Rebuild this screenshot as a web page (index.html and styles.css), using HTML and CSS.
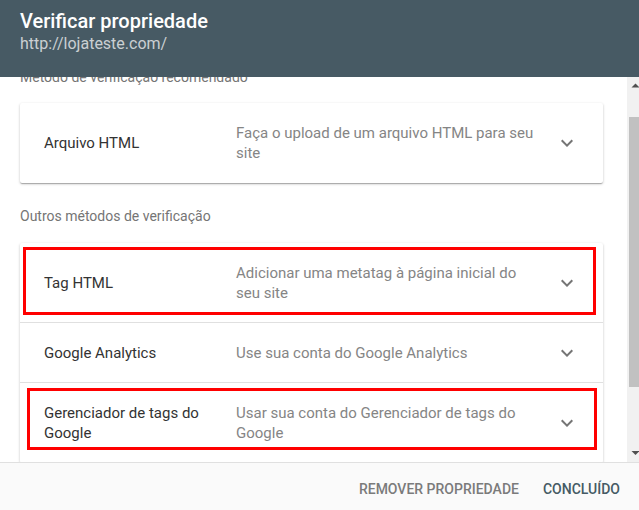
FILE: index.html
```html
<!DOCTYPE html>
<html lang="pt-BR">
<head>
<meta charset="utf-8">
<title>Verificar propriedade</title>
<link rel="stylesheet" href="styles.css">
</head>
<body>
<div class="dialog">
  <header class="head">
    <div class="head-title">Verificar propriedade</div>
    <div class="head-url">http://lojateste.com/</div>
  </header>
  <div class="body-area">
    <main class="content">
      <div class="section-label first">Método de verificação recomendado</div>
      <div class="card">
        <div class="row">
          <div class="m-title">Arquivo HTML</div>
          <div class="m-desc">Faça o upload de um arquivo HTML para seu site</div>
          <svg class="chev" viewBox="0 0 24 24" width="24" height="24"><path d="M16.59 8.59L12 13.17 7.41 8.59 6 10l6 6 6-6z"/></svg>
        </div>
      </div>
      <div class="section-label">Outros métodos de verificação</div>
      <div class="card">
        <div class="row divided mark mark-a">
          <div class="m-title">Tag HTML</div>
          <div class="m-desc">Adicionar uma metatag à página inicial do seu site</div>
          <svg class="chev" viewBox="0 0 24 24" width="24" height="24"><path d="M16.59 8.59L12 13.17 7.41 8.59 6 10l6 6 6-6z"/></svg>
        </div>
        <div class="row divided">
          <div class="m-title">Google Analytics</div>
          <div class="m-desc">Use sua conta do Google Analytics</div>
          <svg class="chev" viewBox="0 0 24 24" width="24" height="24"><path d="M16.59 8.59L12 13.17 7.41 8.59 6 10l6 6 6-6z"/></svg>
        </div>
        <div class="row mark mark-b">
          <div class="m-title">Gerenciador de tags do Google</div>
          <div class="m-desc">Usar sua conta do Gerenciador de tags do Google</div>
          <svg class="chev" viewBox="0 0 24 24" width="24" height="24"><path d="M16.59 8.59L12 13.17 7.41 8.59 6 10l6 6 6-6z"/></svg>
        </div>
      </div>
    </main>
    <div class="scrollbar" aria-hidden="true">
      <div class="sb-btn">
        <svg width="17" height="17" viewBox="0 0 17 17"><path d="M4.5 10.5L8.5 6.5L12.5 10.5Z"/></svg>
      </div>
      <div class="sb-track"><div class="sb-thumb"></div></div>
      <div class="sb-btn">
        <svg width="17" height="17" viewBox="0 0 17 17"><path d="M4.5 6L12.5 6L8.5 10Z"/></svg>
      </div>
    </div>
  </div>
  <footer class="foot">
    <span class="btn btn-muted">Remover propriedade</span>
    <span class="btn btn-primary">Concluído</span>
  </footer>
</div>
<script src="script.js"></script>
</body>
</html>
```
FILE: styles.css
```css
html, body {
  margin: 0;
  padding: 0;
  overflow: hidden;
  background: #fff;
}
body {
  font-family: Roboto, "Liberation Sans", Arial, sans-serif;
  width: 639px;
  height: 510px;
}
.dialog {
  width: 644px;
  height: 510px;
  display: flex;
  flex-direction: column;
}
.head {
  height: 77px;
  box-sizing: border-box;
  background: #475a64;
  padding: 9px 20px 0;
  flex-shrink: 0;
}
.head-title {
  color: #fff;
  font-size: 20px;
  font-weight: 500;
  line-height: 24px;
}
.head-url {
  color: rgba(255, 255, 255, 0.72);
  font-size: 16px;
  line-height: 20px;
  margin-top: 1px;
}
.body-area {
  flex: 1;
  min-height: 0;
  display: flex;
}
.content {
  flex: 1;
  min-width: 0;
  overflow: hidden;
  padding: 22px 24px 22px 20px;
  box-sizing: border-box;
}
.scrollbar {
  width: 17px;
  flex-shrink: 0;
  background: #f1f1f1;
  display: flex;
  flex-direction: column;
}
.sb-btn {
  height: 17px;
  flex-shrink: 0;
}
.sb-btn svg {
  display: block;
  fill: #505050;
}
.sb-track {
  flex: 1;
  padding: 0 2px;
}
.sb-thumb {
  margin-top: 22.5px;
  height: 270px;
  background: #c1c1c1;
}
.section-label {
  color: #757575;
  font-size: 14px;
  line-height: 20px;
  margin: 23px 0 17px;
}
.section-label.first {
  margin-top: 0;
  margin-bottom: 16px;
}
.card {
  background: #fff;
  border-radius: 2px;
  box-shadow: 0 1px 3px rgba(0, 0, 0, 0.2), 0 1px 1px rgba(0, 0, 0, 0.14), 0 2px 1px -1px rgba(0, 0, 0, 0.12);
}
.row {
  position: relative;
  display: flex;
  align-items: center;
  padding: 20px 24px;
  font-size: 15px;
  line-height: 20px;
}
.row.divided {
  padding-bottom: 19px;
  border-bottom: 1px solid #e0e0e0;
}
.m-title {
  width: 192px;
  flex-shrink: 0;
  box-sizing: border-box;
  padding-right: 16px;
  color: #333;
}
.m-desc {
  flex: 1;
  margin-right: 16px;
  color: #858585;
}
.chev {
  width: 24px;
  height: 24px;
  margin: -2px 0;
  flex-shrink: 0;
  fill: #757575;
}
.mark::after {
  content: "";
  position: absolute;
  border: 3px solid #ff0000;
  pointer-events: none;
}
.mark-a::after {
  left: 3px;
  right: 7px;
  top: 4px;
  bottom: 7px;
}
.mark-b::after {
  left: 7px;
  right: 6px;
  top: 5px;
  bottom: 13px;
}
.foot {
  height: 48px;
  box-sizing: border-box;
  flex-shrink: 0;
  background: #fafafa;
  border-top: 1px solid #e0e0e0;
  display: flex;
  justify-content: flex-end;
  align-items: flex-start;
  gap: 24px;
  padding: 16px 24px 0 0;
}
.btn {
  font-size: 14px;
  font-weight: 500;
  line-height: 20px;
  text-transform: uppercase;
}
.btn-muted {
  color: #7b7b7b;
}
.btn-primary {
  color: #455a64;
}
```
FILE: script.js
```js
document.querySelector('.content').scrollTop = 32;
```
